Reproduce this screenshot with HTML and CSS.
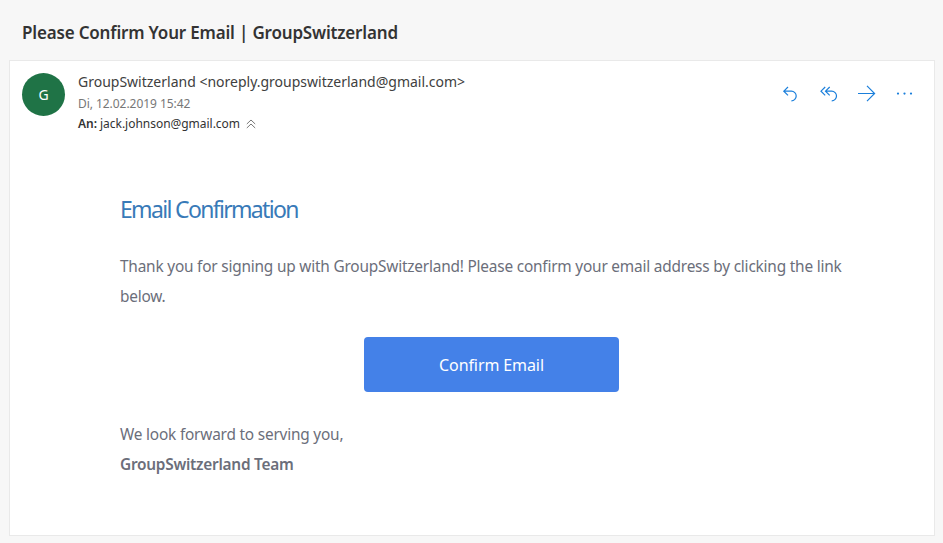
FILE: index.html
```html
<!DOCTYPE html>
<html lang="de">
<head>
<meta charset="utf-8">
<title>Please Confirm Your Email | GroupSwitzerland</title>
<link rel="stylesheet" href="styles.css">
</head>
<body>
<h1 class="subject">Please Confirm Your Email | GroupSwitzerland</h1>
<main class="message">
  <header class="message-header">
    <div class="avatar">G</div>
    <div class="meta">
      <div class="sender">GroupSwitzerland &lt;noreply.groupswitzerland@gmail.com&gt;</div>
      <div class="date">Di, 12.02.2019 15:42</div>
      <div class="recipient"><b>An:</b> <span>jack.johnson@gmail.com</span>
        <svg class="collapse" width="10" height="10" viewBox="0 0 10 10"><path d="M.8 5 5 1 9.200 5M.8 9 5 5l4.200 4"/></svg>
      </div>
    </div>
    <nav class="actions">
      <svg width="18" height="18" viewBox="0 0 18 18"><path d="M6 2 1.800 6.200 6 10.400M1.800 6.200h7.600a4.800 4.800 0 0 1 0 9.600"/></svg>
      <svg width="18" height="18" viewBox="0 0 18 18"><path d="M5.200 2 1 6.200l4.200 4.200M9.700 2 5.500 6.200l4.200 4.200M5.500 6.200h6.200a4.800 4.800 0 0 1 0 9.600"/></svg>
      <svg width="18" height="18" viewBox="0 0 18 18"><path d="M0 8.500h16.600M9 .9l7.600 7.600L9 16.100"/></svg>
      <svg class="dots" width="18" height="18" viewBox="0 0 18 18"><circle cx="2" cy="8.600" r="1.100"/><circle cx="8.500" cy="8.600" r="1.100"/><circle cx="15" cy="8.600" r="1.100"/></svg>
    </nav>
  </header>
  <article class="content">
    <h2>Email Confirmation</h2>
    <p>Thank you for signing up with GroupSwitzerland! Please confirm your email address by clicking the link below.</p>
    <a class="button">Confirm Email</a>
    <p class="closing">We look forward to serving you,<br><strong>GroupSwitzerland Team</strong></p>
  </article>
</main>
</body>
</html>
```
FILE: styles.css
```css
* { box-sizing: border-box; }
body { margin: 0; height: 543px; overflow: hidden; background: #f7f7f7; color: #333; font-family: "Noto Sans", "Open Sans", sans-serif; }
.subject { margin: 0; height: 60px; padding: 21px 22px 0; font-size: 17px; line-height: 24px; font-weight: 600; letter-spacing: -.18px; }
.message { height: 476px; margin: 0 8px 0 9px; border: 1px solid #e9e9e9; background: #fff; }
.message-header { display: flex; padding: 12px 20px 0 12px; height: 74px; }
.avatar { width: 43px; height: 43px; border-radius: 50%; background: #1f7346; color: #fff; font-size: 14px; line-height: 43px; text-align: center; }
.meta { margin-left: 13px; flex: 1; white-space: nowrap; }
.sender { font-size: 14px; line-height: 18px; padding-bottom: 2px; color: #404040; }
.date { font-size: 12px; line-height: 21px; color: #777; letter-spacing: -.05px; }
.recipient { font-size: 12px; line-height: 20px; letter-spacing: -.03px; }
.recipient b { font-weight: 600; }
.collapse, .actions svg { fill: none; stroke: #1b7fdb; stroke-width: 1.200; }
.collapse { stroke: #777; stroke-width: 1; margin-left: 3px; vertical-align: -1px; }
.actions { display: flex; gap: 20px; height: 42px; align-items: center; }
.actions .dots { fill: #1b7fdb; stroke: none; }
.content { margin: 0 71px 0 110px; padding-top: 59px; color: #6b6e7a; font-size: 15.4px; line-height: 30px; letter-spacing: -.2px; }
.content h2 { color: #387ab8; font-size: 23px; font-weight: 400; margin: 0; letter-spacing: -1.67px; }
.content p { margin: 28px 0 25px; }
.content .closing { margin: 28px 0 0; }
.content strong { font-weight: 600; letter-spacing: -.25px; }
.button { display: block; width: 255px; height: 55px; margin: 0 auto; border-radius: 4px; background: #4481e8; color: #fff; font-size: 16px; letter-spacing: -.1px; text-align: center; line-height: 57px; }
```
